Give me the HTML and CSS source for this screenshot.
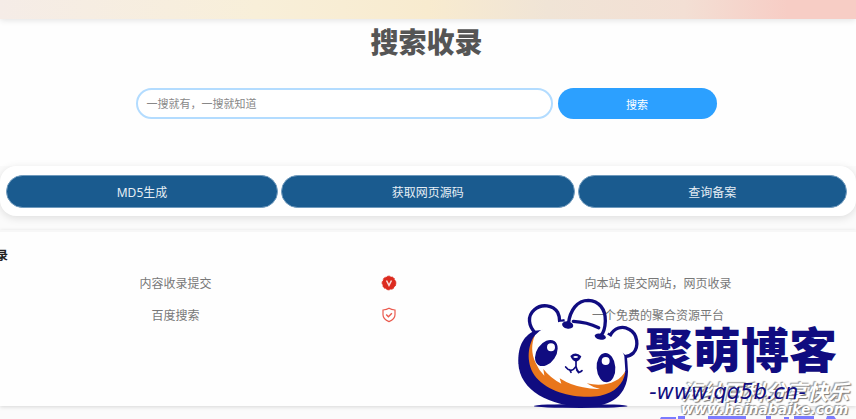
FILE: index.html
```html
<!DOCTYPE html>
<html lang="zh-CN">
<head>
    <meta charset="UTF-8">
    <meta name="viewport" content="width=device-width, initial-scale=1.0">
    <title>搜索收录</title>
    <link rel="stylesheet" href="styles.css">
</head>
<body>
    <div class="banner"></div>

    <main>
        <section class="search">
            <h1>搜索收录</h1>
            <form class="search-form">
                <input type="text" class="search-input" aria-label="搜索" placeholder="一搜就有，一搜就知道">
                <button type="submit" class="search-btn">搜索</button>
            </form>
        </section>

        <nav class="tools">
            <button type="button" class="tool">MD5生成</button>
            <button type="button" class="tool">获取网页源码</button>
            <button type="button" class="tool">查询备案</button>
        </nav>

        <section class="panel">
            <h2>录</h2>
            <table class="list">
                <tr>
                    <td>内容收录提交</td>
                    <td class="state">
                        <svg width="16" height="16" viewBox="0 0 16 16">
                            <circle cx="8" cy="8" r="6.800" fill="#dc2b1f" stroke="#dc2b1f" stroke-dasharray="3 2"/>
                            <path d="M5.500 5.500L8 10.300l2.500-4.800" fill="none" stroke="#fbdcda" stroke-width="1.500"/>
                        </svg>
                    </td>
                    <td class="info">向本站 提交网站，网页收录</td>
                </tr>
                <tr>
                    <td>百度搜索</td>
                    <td class="state">
                        <svg width="16" height="16" viewBox="0 0 16 16" fill="none" stroke="#ea5a4e">
                            <path d="M8 1.300c1.800 1.200 3.800 1.600 6 1.700v4.700c0 3-2.300 5.300-6 6.900-3.700-1.600-6-3.900-6-6.900V3C4.200 2.900 6.200 2.500 8 1.300z" stroke-width="1.200"/>
                            <path d="M5.200 7.500l2.200 2.200 3.500-3.500" stroke-width="1.400"/>
                        </svg>
                    </td>
                    <td class="info">一个免费的聚合资源平台</td>
                </tr>
            </table>
        </section>
    </main>

    <footer>
        <svg width="176" height="3" viewBox="0 0 176 3" fill="#7b7bff">
            <path d="M1 1h15v2H0zM18 0h7v3h-7zM48 0h38v3H48zM106 0h5v3h-5zM124 1h5v2h-5zM134 0h20v3h-20zM167 0h7l2 3h-10z"/>
        </svg>
    </footer>

    <div class="mark">
        <div class="mark-name">海纳百科分享快乐</div>
        <div class="mark-url">www.hainabaike.com</div>
    </div>

    <div class="brand">
        <svg class="panda" width="136" height="129" viewBox="0 0 408 387">
            <!-- ears -->
            <g fill="#fff" stroke="#100c80" stroke-width="10" stroke-linejoin="round">
                <path d="M80 130C58 108 54 78 76 59C98 40 132 45 146 67Q152 78 152 95L167 92"/>
                <path d="M296 131L303 137C315 114 340 105 360 118C387 132 390 170 373 189Q364 198 348 200"/>
            </g>
            <!-- head -->
            <path d="M78 122C38 138 26 178 28 220C32 302 122 350 230 350C310 350 354 315 357 245L354 200L300 150L180 110z" fill="#100c80"/>
            <path d="M76 138C54 170 51 226 82 263C124 312 215 328 274 317C316 309 344 282 349 246L240 240L110 200z" fill="#e9761b"/>
            <path d="M78 136C67 160 66 190 80 219Q90 242 106 257L103 237Q125 265 157 281L152 265Q187 287 222 292Q247 298 273 297Q249 291 233 280C285 292 333 277 349 243L346 198Q332 155 302 138L272 119Q240 101 195 93L153 95Q105 106 78 136z" fill="#fff"/>
            <g fill="#100c80">
                <ellipse cx="112" cy="189" rx="29" ry="43" transform="rotate(34 112 189)"/>
                <ellipse cx="291" cy="233" rx="28" ry="44" transform="rotate(-4 291 233)"/>
                <ellipse cx="176" cy="105" rx="17" ry="11" transform="rotate(12 176 105)"/>
                <ellipse cx="274" cy="140" rx="17" ry="9" transform="rotate(12 274 140)"/>
                <path d="M184 198Q200 183 217 199Q212 214 201 215Q190 213 184 198z"/>
                <ellipse cx="215" cy="348" rx="141" ry="6"/>
            </g>
            <circle cx="126" cy="172" r="12" fill="#fff"/>
            <circle cx="290" cy="213" r="12" fill="#fff"/>
            <ellipse cx="200" cy="201" rx="7" ry="3" fill="#fff"/>
            <!-- handle and mouth -->
            <g fill="none" stroke="#100c80" stroke-linecap="round">
                <path d="M178 102C183 60 205 31 238 31C270 32 290 58 289 93Q288 124 275 138" stroke-width="10"/>
                <path d="M193 94Q234 96 269 113" stroke-width="10"/>
                <path d="M201 213V229Q186 252 170 231M201 229Q207 255 219 242M182 239l4 8M203 240l6 8" stroke-width="5"/>
            </g>
        </svg>
        <div class="brand-text">
            <div class="brand-name">聚萌博客</div>
            <div class="brand-url">-www.qq5b.cn-</div>
        </div>
    </div>
</body>
</html>
```

FILE: styles.css
```css
* {
    box-sizing: border-box;
}
body {
    margin: 0;
    overflow: hidden;
    background: #fbfbfb;
    color: #777;
    font-family: "Noto Sans", "Noto Sans CJK SC", sans-serif;
    font-size: 12px;
}
.banner {
    position: relative;
    height: 19px;
    background: linear-gradient(90deg, #f5ece7, #f8efd9 30%, #f8ebcf 50%, #f0e4d6 64%, #f3dfd4 80%, #f7cdc5 92%, #f7cdc5);
    box-shadow: 0 1px 6px rgba(0, 0, 0, 0.12);
}
.search {
    padding: 2px 3px 47px 0;
    background: #fefefe;
}
h1 {
    margin: 0;
    line-height: 42px;
    font-size: 28px;
    font-weight: 900;
    color: #555;
    text-align: center;
}
.search-form {
    display: flex;
    gap: 5px;
    width: 68%;
    margin: 25px auto 0;
}
.search-input {
    flex: 1;
    min-width: 0;
    height: 31px;
    padding: 0 8px;
    border: 2px solid #b3dcff;
    border-radius: 16px;
    outline: none;
    background: #fff;
    font: inherit;
    font-size: 11px;
}
.search-input::placeholder {
    color: #888;
}
.search-btn {
    width: 159px;
    height: 31px;
    border: 0;
    border-radius: 16px;
    background: #2ca0ff;
    color: #fff;
    font: inherit;
    font-size: 11px;
}
.tools {
    display: flex;
    gap: 3px;
    padding: 9px 9px 8px 6px;
    border-radius: 16px;
    background: #fff;
    box-shadow: 0 2px 8px rgba(0, 0, 0, 0.12);
}
.tool {
    flex: 1 1 auto;
    height: 33px;
    border: 1px solid #6f9abd;
    border-radius: 17px;
    background: #1a5b8f;
    color: #e6eef5;
    font: inherit;
}
.panel {
    margin-top: 14px;
    padding-bottom: 75px;
    border-top: 2px solid #f7f7f7;
    background: #fefefe;
    box-shadow: 0 1px 4px rgba(0, 0, 0, 0.15);
}
h2 {
    margin: 0 0 0 -4px;
    padding: 15px 0 2px;
    line-height: 18px;
    font-size: 12px;
    color: #222;
}
.list {
    width: 100%;
    border-collapse: collapse;
    table-layout: fixed;
    text-align: center;
}
.list td {
    height: 32px;
    padding: 0;
}
.list td:first-child {
    width: 41%;
}
.list .state {
    width: 9%;
}
.list .info {
    padding-left: 32px;
}
.list svg {
    display: block;
    margin: auto;
}
footer {
    display: flex;
    justify-content: flex-end;
    padding: 10px 20px 0 0;
}
.brand {
    position: absolute;
    right: 19px;
    bottom: 0;
    display: flex;
    color: #100c80;
}
.brand-text {
    padding-top: 30px;
}
.brand-name {
    font-size: 48px;
    font-weight: 900;
    line-height: 60px;
}
.brand-url {
    padding-left: 4px;
    font-family: "DejaVu Sans", sans-serif;
    font-size: 21px;
    line-height: 24px;
    font-style: italic;
}
.mark {
    position: absolute;
    right: 7px;
    bottom: 3px;
    color: #fff;
    font-style: italic;
    font-weight: bold;
    text-shadow: 1px 1px 1px #777, -1px -1px 1px #999;
}
.mark-name {
    font-size: 21px;
    line-height: 20px;
}
.mark-url {
    font-family: "DejaVu Sans", sans-serif;
    font-size: 14px;
    line-height: 14px;
}
```
